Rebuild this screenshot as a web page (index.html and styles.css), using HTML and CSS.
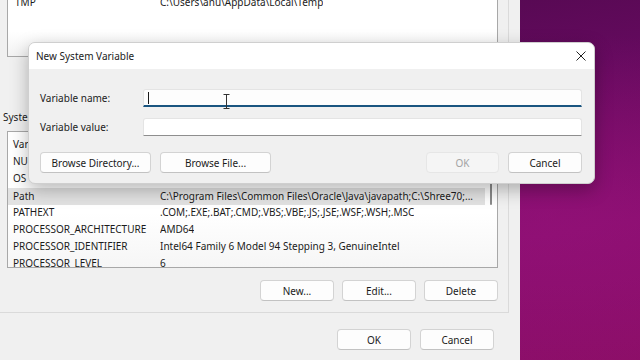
FILE: index.html
```html
<!DOCTYPE html>
<html>
<head>
    <meta name="viewport" content="width=device-width, initial-scale=1.0">
    <link rel="stylesheet" href="styles.css">
</head>
<body>
    <!-- Environment Variables window (behind) -->
    <div class="env-window">
        <div class="group">
            <div class="var-list user-list">
                <div class="rows">
                    <div class="row first"><span class="name">TMP</span><span class="value">C:\Users\anu\AppData\Local\Temp</span></div>
                </div>
            </div>

            <div class="group-label">System variables</div>

            <div class="var-list sys-list">
                <div class="rows">
                    <div class="row header"><span class="name">Variable</span><span class="value">Value</span></div>
                    <div class="row"><span class="name">NUMBER_OF_PROCESSORS</span><span class="value">4</span></div>
                    <div class="row"><span class="name">OS</span><span class="value">Windows_NT</span></div>
                    <div class="row selected"><span class="name">Path</span><span class="value">C:\Program Files\Common Files\Oracle\Java\javapath;C:\Shree70;...</span></div>
                    <div class="row"><span class="name">PATHEXT</span><span class="value">.COM;.EXE;.BAT;.CMD;.VBS;.VBE;.JS;.JSE;.WSF;.WSH;.MSC</span></div>
                    <div class="row"><span class="name">PROCESSOR_ARCHITECTURE</span><span class="value">AMD64</span></div>
                    <div class="row"><span class="name">PROCESSOR_IDENTIFIER</span><span class="value">Intel64 Family 6 Model 94 Stepping 3, GenuineIntel</span></div>
                    <div class="row"><span class="name">PROCESSOR_LEVEL</span><span class="value">6</span></div>
                </div>
                <div class="scroll-track"><div class="scroll-thumb"></div></div>
            </div>

            <div class="btn-row">
                <button class="btn">New...</button>
                <button class="btn">Edit...</button>
                <button class="btn">Delete</button>
            </div>
        </div>

        <div class="btn-row footer">
            <button class="btn">OK</button>
            <button class="btn">Cancel</button>
        </div>
    </div>

    <!-- New System Variable dialog (on top) -->
    <div class="dialog">
        <div class="dialog-title">
            <span>New System Variable</span>
            <svg class="close" width="10" height="10" viewBox="0 0 10 10">
                <path d="M0.5 0.5 L9.5 9.5 M9.5 0.5 L0.5 9.5" stroke="#222" stroke-width="1" fill="none"/>
            </svg>
        </div>
        <div class="dialog-body">
            <div class="field">
                <label>Variable name:</label>
                <div class="input focused"><span class="caret"></span></div>
            </div>
            <div class="field">
                <label>Variable value:</label>
                <div class="input"></div>
            </div>
            <div class="dialog-buttons">
                <button class="btn wide">Browse Directory...</button>
                <button class="btn wide">Browse File...</button>
                <span class="spacer"></span>
                <button class="btn disabled">OK</button>
                <button class="btn">Cancel</button>
            </div>
        </div>

        <!-- mouse pointer (I-beam) -->
        <svg class="ibeam" width="7" height="15" viewBox="0 0 7 15">
            <path d="M0.5 0.5 H6.5 M3.5 0.5 V14.5 M0.5 14.5 H6.5" stroke="#333" stroke-width="1" fill="none"/>
        </svg>
    </div>
</body>
</html>
```

FILE: styles.css
```css
body {
    margin: 0;
    width: 640px;
    height: 360px;
    overflow: hidden;
    display: flex;
    font-family: "Noto Sans", "Open Sans", sans-serif;
    font-size: 10px;
    color: #1b1b1b;
    background:
        radial-gradient(ellipse at 85% 60%, rgba(160, 20, 130, 0.45), rgba(160, 20, 130, 0) 60%),
        linear-gradient(170deg, #4a0848 0%, #640a5e 35%, #850d6c 70%, #8b0e66 100%);
}

/* Environment Variables window */
.env-window {
    width: 520px;
    height: 360px;
    background-color: #f0f0f0;
    display: flex;
    flex-direction: column;
}

.group {
    width: 509px;
    height: 313px;
    box-sizing: border-box;
    padding: 0 10px 0 7px;
    border-right: 1px solid #dadada;
    border-bottom: 1px solid #dadada;
    display: flex;
    flex-direction: column;
}

.var-list {
    display: flex;
    border: 1px solid #a8a8a8;
    background: linear-gradient(#ffffff 55%, #f3f3f3);
    overflow: hidden;
}

.user-list {
    height: 57px;
    box-sizing: border-box;
    border-top: none;
}

.sys-list {
    height: 137px;
    box-sizing: border-box;
    background: linear-gradient(#ffffff 60%, #f6f6f6);
}

.rows {
    flex: 1;
    min-width: 0;
    padding-top: 4px;
}

.user-list .rows {
    padding-top: 0;
}

.row {
    display: flex;
    height: 17px;
    line-height: 17px;
    white-space: nowrap;
}

.row.first {
    margin-top: -6px;
}

.row .name {
    flex: none;
    width: 147px;
    padding-left: 5px;
}

.row .value {
    overflow: hidden;
}

.user-list .row .name {
    width: 145px;
    padding-left: 7px;
}

.row.selected {
    background-color: #e2e2e2;
    margin-top: 1px;
    margin-bottom: -1px;
}

.scroll-track {
    flex: none;
    width: 12px;
}

.scroll-thumb {
    width: 2px;
    height: 22px;
    margin: 51px 0 0 5px;
    background-color: #8a8a8a;
    border-radius: 1px;
}

.group-label {
    margin: 54px 0 8px -4px;
    line-height: 12px;
}

/* Buttons */
.btn-row {
    display: flex;
    justify-content: flex-end;
    gap: 8px;
    margin-top: 12px;
}

.btn {
    width: 74px;
    height: 21px;
    box-sizing: border-box;
    padding: 0;
    font-family: inherit;
    font-size: 10px;
    color: #1b1b1b;
    background-color: #fdfdfd;
    border: 1px solid #d3d3d3;
    border-bottom-color: #c2c2c2;
    border-radius: 4px;
}

.footer {
    margin-top: 16px;
    padding-right: 26px;
    gap: 9px;
}

/* New System Variable dialog */
.dialog {
    position: absolute;
    left: 28px;
    top: 42px;
    width: 567px;
    height: 142px;
    box-sizing: border-box;
    border: 1px solid #cfcfcf;
    border-radius: 7px;
    background-color: #f0f0f0;
    box-shadow: 0 6px 18px rgba(0, 0, 0, 0.28);
    overflow: hidden;
}

.dialog-title {
    height: 26px;
    background-color: #ffffff;
    display: flex;
    align-items: center;
    justify-content: space-between;
    padding: 0 8px 0 7px;
}

.dialog-body {
    padding: 20px 12px 0 11px;
    display: flex;
    flex-direction: column;
    gap: 11px;
}

.field {
    display: flex;
    align-items: center;
}

.field label {
    width: 103px;
}

.input {
    flex: 1;
    height: 18px;
    box-sizing: border-box;
    background-color: #ffffff;
    border: 1px solid #e4e4e4;
    border-bottom-color: #8e8e8e;
    border-radius: 3px 3px 0 0;
    display: flex;
    align-items: center;
}

.input.focused {
    background-color: #fdfdfd;
    border-bottom: 2px solid #1a5580;
}

.caret {
    width: 1px;
    height: 12px;
    margin-left: 4px;
    background-color: #1b1b1b;
}

.dialog-buttons {
    display: flex;
    gap: 9px;
    margin-top: 5px;
}

.btn.wide {
    width: 111px;
}

.spacer {
    flex: 1;
}

.btn.disabled {
    width: 73px;
    color: #a3a3a3;
    background-color: #f5f5f5;
    border-color: #e6e6e6;
}

.ibeam {
    position: absolute;
    left: 194px;
    top: 51px;
}
```
